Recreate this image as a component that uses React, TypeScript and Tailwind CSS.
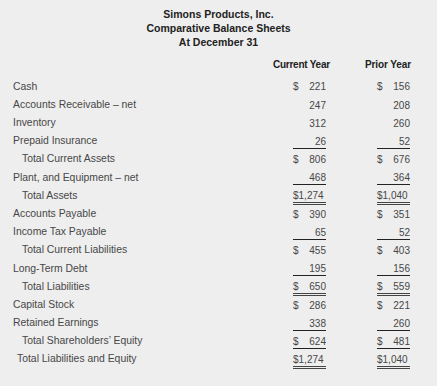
type Row = {
  label: string
  indent?: 0 | 1 | 2
  cur: [string, string]
  prior: [string, string]
  line?: "single" | "double"
}

const rows: Row[] = [
  { label: "Cash", cur: ["$", "221"], prior: ["$", "156"] },
  { label: "Accounts Receivable – net", cur: ["", "247"], prior: ["", "208"] },
  { label: "Inventory", cur: ["", "312"], prior: ["", "260"] },
  { label: "Prepaid Insurance", cur: ["", "26"], prior: ["", "52"], line: "single" },
  { label: "Total Current Assets", indent: 1, cur: ["$", "806"], prior: ["$", "676"] },
  { label: "Plant, and Equipment – net", cur: ["", "468"], prior: ["", "364"], line: "single" },
  { label: "Total Assets", indent: 1, cur: ["$1,274", ""], prior: ["$1,040", ""], line: "double" },
  { label: "Accounts Payable", cur: ["$", "390"], prior: ["$", "351"] },
  { label: "Income Tax Payable", cur: ["", "65"], prior: ["", "52"], line: "single" },
  { label: "Total Current Liabilities", indent: 1, cur: ["$", "455"], prior: ["$", "403"] },
  { label: "Long-Term Debt", cur: ["", "195"], prior: ["", "156"], line: "single" },
  { label: "Total Liabilities", indent: 1, cur: ["$", "650"], prior: ["$", "559"], line: "double" },
  { label: "Capital Stock", cur: ["$", "286"], prior: ["$", "221"] },
  { label: "Retained Earnings", cur: ["", "338"], prior: ["", "260"], line: "single" },
  { label: "Total Shareholders’ Equity", indent: 1, cur: ["$", "624"], prior: ["$", "481"], line: "single" },
  { label: "Total Liabilities and Equity", indent: 2, cur: ["$1,274", ""], prior: ["$1,040", ""], line: "double" },
]

function Amount({ value, line }: { value: [string, string]; line?: Row["line"] }) {
  const border =
    line === "double"
      ? "border-b-[3px] border-double border-[#444]"
      : line === "single"
        ? "border-b border-[#222]"
        : "border-b border-transparent"
  return (
    <div className={`flex w-[33px] justify-between leading-[13px] ${border} ${line === "double" ? "mt-[3px]" : "mt-[2px]"}`}>
      <span>{value[0]}</span>
      <span>{value[1]}</span>
    </div>
  )
}

export default function App() {
  return (
    <div className="h-[386px] w-[437px] bg-[#eeeeee] font-['Liberation_Sans',Arial,sans-serif] text-[10px] text-[#474747]">
      <div className="flex flex-col items-center pt-[8px] text-[10.5px] font-bold leading-[13.8px] text-[#222]">
        <div>Simons Products, Inc.</div>
        <div>Comparative Balance Sheets</div>
        <div>At December 31</div>
      </div>

      <div className="mt-[8px] flex h-[14px] items-center text-[10px] font-bold tracking-[-0.25px] text-[#222]">
        <div className="w-[273px]" />
        <div className="w-[92px]">Current Year</div>
        <div className="tracking-[-0.1px]">Prior Year</div>
      </div>

      <div className="mt-[6px]">
        {rows.map((r) => (
          <div key={r.label} className="flex h-[18.2px] items-center">
            <div
              className={`w-[293px] text-[10.4px] ${r.indent === 1 ? "pl-[22px]" : r.indent === 2 ? "pl-[17px]" : "pl-[13px]"}`}
            >
              {r.label}
            </div>
            <Amount value={r.cur} line={r.line} />
            <div className="w-[51px]" />
            <Amount value={r.prior} line={r.line} />
          </div>
        ))}
      </div>
    </div>
  )
}
